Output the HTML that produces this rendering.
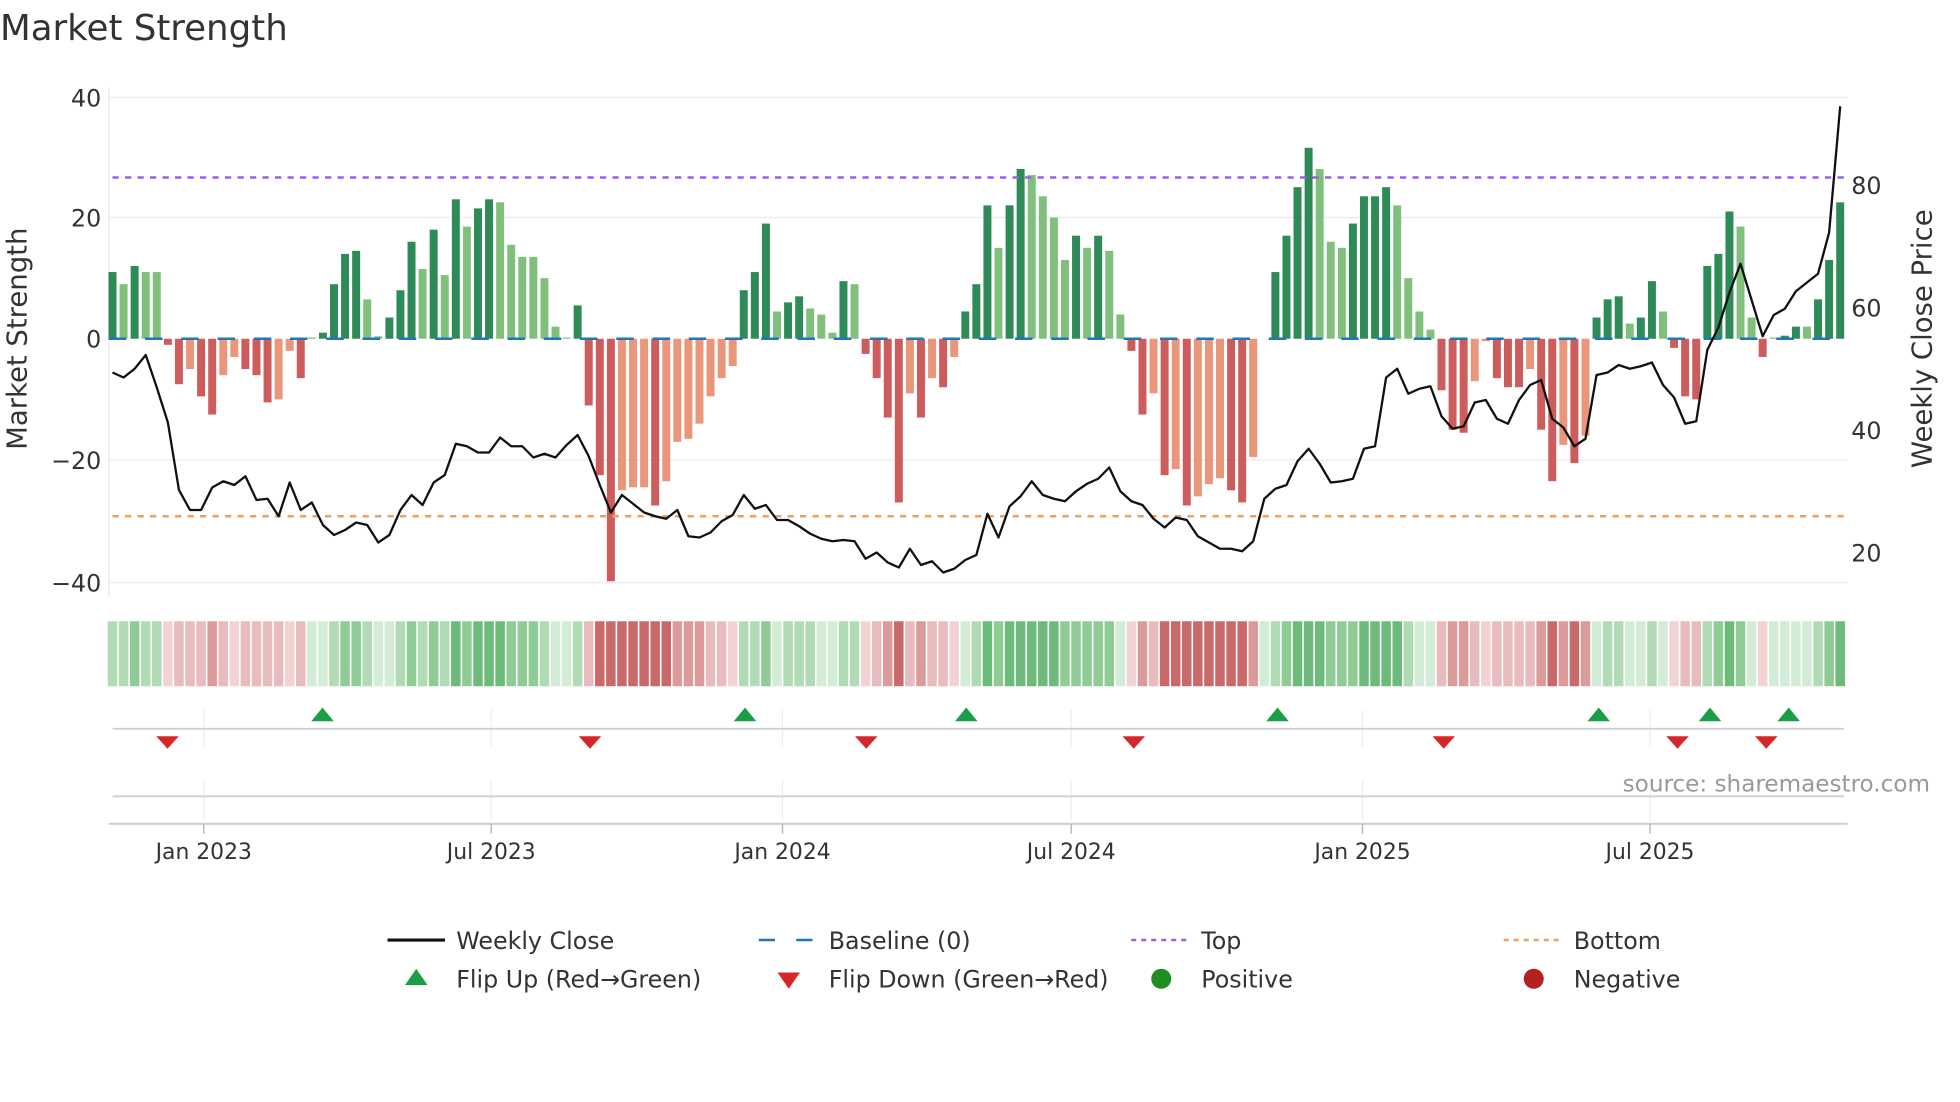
<!DOCTYPE html>
<html><head><meta charset="utf-8"><style>
html,body{margin:0;padding:0;background:#fff;}
svg{display:block;font-family:"DejaVu Sans","Liberation Sans",sans-serif;}
.G{fill:#2e8b57}.g{fill:#80c07c}.R{fill:#cd5c5c}.r{fill:#e9967a}
.g1{fill:#d3ecd5}.g2{fill:#b0dbb4}.g3{fill:#8fcb95}.g4{fill:#6dbb7a}
.r1{fill:#f2d3d3}.r2{fill:#e8bcbc}.r3{fill:#dc9b9b}.r4{fill:#c96a6a}
</style></head><body>
<svg width="1960" height="1102" viewBox="0 0 1568 881.6" xmlns="http://www.w3.org/2000/svg">
<rect width="1568" height="882" fill="#fff"/>
<text x="0" y="32" font-size="28.5" fill="#333">Market Strength</text>
<g stroke="#eceef2" stroke-width="1.2">
<line x1="87" x2="1478" y1="78" y2="78"/><line x1="87" x2="1478" y1="174" y2="174"/>
<line x1="87" x2="1478" y1="368" y2="368"/><line x1="87" x2="1478" y1="466" y2="466"/>
<line x1="87" x2="87" y1="70" y2="478"/>
</g>
<g transform="translate(90,271) scale(8.86,-4.85)">
<rect class="G" x="-0.36" y="0" width="0.72" height="11"/>
<rect class="g" x="0.64" y="0" width="0.72" height="9"/>
<rect class="G" x="1.64" y="0" width="0.72" height="12"/>
<rect class="g" x="2.64" y="0" width="0.72" height="11"/>
<rect class="g" x="3.64" y="0" width="0.72" height="11"/>
<rect class="R" x="4.64" y="-1" width="0.72" height="1"/>
<rect class="R" x="5.64" y="-7.5" width="0.72" height="7.5"/>
<rect class="r" x="6.64" y="-5" width="0.72" height="5"/>
<rect class="R" x="7.64" y="-9.5" width="0.72" height="9.5"/>
<rect class="R" x="8.64" y="-12.5" width="0.72" height="12.5"/>
<rect class="r" x="9.64" y="-6" width="0.72" height="6"/>
<rect class="r" x="10.64" y="-3" width="0.72" height="3"/>
<rect class="R" x="11.64" y="-5" width="0.72" height="5"/>
<rect class="R" x="12.64" y="-6" width="0.72" height="6"/>
<rect class="R" x="13.64" y="-10.5" width="0.72" height="10.5"/>
<rect class="r" x="14.64" y="-10" width="0.72" height="10"/>
<rect class="r" x="15.64" y="-2" width="0.72" height="2"/>
<rect class="R" x="16.64" y="-6.5" width="0.72" height="6.5"/>
<rect class="g" x="17.64" y="0" width="0.72" height="0.2"/>
<rect class="G" x="18.64" y="0" width="0.72" height="1"/>
<rect class="G" x="19.64" y="0" width="0.72" height="9"/>
<rect class="G" x="20.64" y="0" width="0.72" height="14"/>
<rect class="G" x="21.64" y="0" width="0.72" height="14.5"/>
<rect class="g" x="22.64" y="0" width="0.72" height="6.5"/>
<rect class="g" x="23.64" y="0" width="0.72" height="0.4"/>
<rect class="G" x="24.64" y="0" width="0.72" height="3.5"/>
<rect class="G" x="25.64" y="0" width="0.72" height="8"/>
<rect class="G" x="26.64" y="0" width="0.72" height="16"/>
<rect class="g" x="27.64" y="0" width="0.72" height="11.5"/>
<rect class="G" x="28.64" y="0" width="0.72" height="18"/>
<rect class="g" x="29.64" y="0" width="0.72" height="10.5"/>
<rect class="G" x="30.64" y="0" width="0.72" height="23"/>
<rect class="g" x="31.64" y="0" width="0.72" height="18.5"/>
<rect class="G" x="32.64" y="0" width="0.72" height="21.5"/>
<rect class="G" x="33.64" y="0" width="0.72" height="23"/>
<rect class="g" x="34.64" y="0" width="0.72" height="22.5"/>
<rect class="g" x="35.64" y="0" width="0.72" height="15.5"/>
<rect class="g" x="36.64" y="0" width="0.72" height="13.5"/>
<rect class="g" x="37.64" y="0" width="0.72" height="13.5"/>
<rect class="g" x="38.64" y="0" width="0.72" height="10"/>
<rect class="g" x="39.64" y="0" width="0.72" height="2"/>
<rect class="g" x="40.64" y="0" width="0.72" height="0.2"/>
<rect class="G" x="41.64" y="0" width="0.72" height="5.5"/>
<rect class="R" x="42.64" y="-11" width="0.72" height="11"/>
<rect class="R" x="43.64" y="-22.5" width="0.72" height="22.5"/>
<rect class="R" x="44.64" y="-40" width="0.72" height="40"/>
<rect class="r" x="45.64" y="-25" width="0.72" height="25"/>
<rect class="r" x="46.64" y="-24.5" width="0.72" height="24.5"/>
<rect class="r" x="47.64" y="-24.5" width="0.72" height="24.5"/>
<rect class="R" x="48.64" y="-27.5" width="0.72" height="27.5"/>
<rect class="r" x="49.64" y="-23.5" width="0.72" height="23.5"/>
<rect class="r" x="50.64" y="-17" width="0.72" height="17"/>
<rect class="r" x="51.64" y="-16.5" width="0.72" height="16.5"/>
<rect class="r" x="52.64" y="-14" width="0.72" height="14"/>
<rect class="r" x="53.64" y="-9.5" width="0.72" height="9.5"/>
<rect class="r" x="54.64" y="-6.5" width="0.72" height="6.5"/>
<rect class="r" x="55.64" y="-4.5" width="0.72" height="4.5"/>
<rect class="G" x="56.64" y="0" width="0.72" height="8"/>
<rect class="G" x="57.64" y="0" width="0.72" height="11"/>
<rect class="G" x="58.64" y="0" width="0.72" height="19"/>
<rect class="g" x="59.64" y="0" width="0.72" height="4.5"/>
<rect class="G" x="60.64" y="0" width="0.72" height="6"/>
<rect class="G" x="61.64" y="0" width="0.72" height="7"/>
<rect class="g" x="62.64" y="0" width="0.72" height="5"/>
<rect class="g" x="63.64" y="0" width="0.72" height="4"/>
<rect class="g" x="64.64" y="0" width="0.72" height="1"/>
<rect class="G" x="65.64" y="0" width="0.72" height="9.5"/>
<rect class="g" x="66.64" y="0" width="0.72" height="9"/>
<rect class="R" x="67.64" y="-2.5" width="0.72" height="2.5"/>
<rect class="R" x="68.64" y="-6.5" width="0.72" height="6.5"/>
<rect class="R" x="69.64" y="-13" width="0.72" height="13"/>
<rect class="R" x="70.64" y="-27" width="0.72" height="27"/>
<rect class="r" x="71.64" y="-9" width="0.72" height="9"/>
<rect class="R" x="72.64" y="-13" width="0.72" height="13"/>
<rect class="r" x="73.64" y="-6.5" width="0.72" height="6.5"/>
<rect class="R" x="74.64" y="-8" width="0.72" height="8"/>
<rect class="r" x="75.64" y="-3" width="0.72" height="3"/>
<rect class="G" x="76.64" y="0" width="0.72" height="4.5"/>
<rect class="G" x="77.64" y="0" width="0.72" height="9"/>
<rect class="G" x="78.64" y="0" width="0.72" height="22"/>
<rect class="g" x="79.64" y="0" width="0.72" height="15"/>
<rect class="G" x="80.64" y="0" width="0.72" height="22"/>
<rect class="G" x="81.64" y="0" width="0.72" height="28"/>
<rect class="g" x="82.64" y="0" width="0.72" height="27"/>
<rect class="g" x="83.64" y="0" width="0.72" height="23.5"/>
<rect class="g" x="84.64" y="0" width="0.72" height="20"/>
<rect class="g" x="85.64" y="0" width="0.72" height="13"/>
<rect class="G" x="86.64" y="0" width="0.72" height="17"/>
<rect class="g" x="87.64" y="0" width="0.72" height="15"/>
<rect class="G" x="88.64" y="0" width="0.72" height="17"/>
<rect class="g" x="89.64" y="0" width="0.72" height="14.5"/>
<rect class="g" x="90.64" y="0" width="0.72" height="4"/>
<rect class="R" x="91.64" y="-2" width="0.72" height="2"/>
<rect class="R" x="92.64" y="-12.5" width="0.72" height="12.5"/>
<rect class="r" x="93.64" y="-9" width="0.72" height="9"/>
<rect class="R" x="94.64" y="-22.5" width="0.72" height="22.5"/>
<rect class="r" x="95.64" y="-21.5" width="0.72" height="21.5"/>
<rect class="R" x="96.64" y="-27.5" width="0.72" height="27.5"/>
<rect class="r" x="97.64" y="-26" width="0.72" height="26"/>
<rect class="r" x="98.64" y="-24" width="0.72" height="24"/>
<rect class="r" x="99.64" y="-23" width="0.72" height="23"/>
<rect class="R" x="100.64" y="-25" width="0.72" height="25"/>
<rect class="R" x="101.64" y="-27" width="0.72" height="27"/>
<rect class="r" x="102.64" y="-19.5" width="0.72" height="19.5"/>
<rect class="G" x="104.64" y="0" width="0.72" height="11"/>
<rect class="G" x="105.64" y="0" width="0.72" height="17"/>
<rect class="G" x="106.64" y="0" width="0.72" height="25"/>
<rect class="G" x="107.64" y="0" width="0.72" height="31.5"/>
<rect class="g" x="108.64" y="0" width="0.72" height="28"/>
<rect class="g" x="109.64" y="0" width="0.72" height="16"/>
<rect class="g" x="110.64" y="0" width="0.72" height="15"/>
<rect class="G" x="111.64" y="0" width="0.72" height="19"/>
<rect class="G" x="112.64" y="0" width="0.72" height="23.5"/>
<rect class="G" x="113.64" y="0" width="0.72" height="23.5"/>
<rect class="G" x="114.64" y="0" width="0.72" height="25"/>
<rect class="g" x="115.64" y="0" width="0.72" height="22"/>
<rect class="g" x="116.64" y="0" width="0.72" height="10"/>
<rect class="g" x="117.64" y="0" width="0.72" height="4.5"/>
<rect class="g" x="118.64" y="0" width="0.72" height="1.5"/>
<rect class="R" x="119.64" y="-8.5" width="0.72" height="8.5"/>
<rect class="R" x="120.64" y="-15" width="0.72" height="15"/>
<rect class="R" x="121.64" y="-15.5" width="0.72" height="15.5"/>
<rect class="r" x="122.64" y="-7" width="0.72" height="7"/>
<rect class="r" x="123.64" y="-0.4" width="0.72" height="0.4"/>
<rect class="R" x="124.64" y="-6.5" width="0.72" height="6.5"/>
<rect class="R" x="125.64" y="-8" width="0.72" height="8"/>
<rect class="R" x="126.64" y="-8" width="0.72" height="8"/>
<rect class="r" x="127.64" y="-5" width="0.72" height="5"/>
<rect class="R" x="128.64" y="-15" width="0.72" height="15"/>
<rect class="R" x="129.64" y="-23.5" width="0.72" height="23.5"/>
<rect class="r" x="130.64" y="-17.5" width="0.72" height="17.5"/>
<rect class="R" x="131.64" y="-20.5" width="0.72" height="20.5"/>
<rect class="r" x="132.64" y="-16" width="0.72" height="16"/>
<rect class="G" x="133.64" y="0" width="0.72" height="3.5"/>
<rect class="G" x="134.64" y="0" width="0.72" height="6.5"/>
<rect class="G" x="135.64" y="0" width="0.72" height="7"/>
<rect class="g" x="136.64" y="0" width="0.72" height="2.5"/>
<rect class="G" x="137.64" y="0" width="0.72" height="3.5"/>
<rect class="G" x="138.64" y="0" width="0.72" height="9.5"/>
<rect class="g" x="139.64" y="0" width="0.72" height="4.5"/>
<rect class="R" x="140.64" y="-1.5" width="0.72" height="1.5"/>
<rect class="R" x="141.64" y="-9.5" width="0.72" height="9.5"/>
<rect class="R" x="142.64" y="-10" width="0.72" height="10"/>
<rect class="G" x="143.64" y="0" width="0.72" height="12"/>
<rect class="G" x="144.64" y="0" width="0.72" height="14"/>
<rect class="G" x="145.64" y="0" width="0.72" height="21"/>
<rect class="g" x="146.64" y="0" width="0.72" height="18.5"/>
<rect class="g" x="147.64" y="0" width="0.72" height="3.5"/>
<rect class="R" x="148.64" y="-3" width="0.72" height="3"/>
<rect class="g" x="149.64" y="0" width="0.72" height="0.2"/>
<rect class="G" x="150.64" y="0" width="0.72" height="0.5"/>
<rect class="G" x="151.64" y="0" width="0.72" height="2"/>
<rect class="g" x="152.64" y="0" width="0.72" height="2"/>
<rect class="G" x="153.64" y="0" width="0.72" height="6.5"/>
<rect class="G" x="154.64" y="0" width="0.72" height="13"/>
<rect class="G" x="155.64" y="0" width="0.72" height="22.5"/>
</g>
<line x1="87" x2="1478" y1="271" y2="271" stroke="#1f77b4" stroke-width="2" stroke-dasharray="14,15"/>
<line x1="90" x2="1478" y1="142" y2="142" stroke="#9b5fe0" stroke-width="2" stroke-dasharray="5,5"/>
<line x1="90" x2="1478" y1="413" y2="413" stroke="#f0a060" stroke-width="2" stroke-dasharray="5,5"/>
<g transform="translate(90,0) scale(8.86,1)">
<polyline fill="none" stroke="#111" stroke-width="2.3" stroke-linejoin="round" vector-effect="non-scaling-stroke" points="0,298 1,302 2,295 3,284 4,310 5,338 6,392 7,408 8,408 9,390 10,385 11,388 12,381 13,400 14,399 15,413 16,386 17,408 18,402 19,420 20,428 21,424 22,418 23,420 24,434 25,428 26,408 27,396 28,404 29,386 30,380 31,355 32,357 33,362 34,362 35,350 36,357 37,357 38,366 39,363 40,366 41,356 42,348 43,365 44,388 45,410 46,396 47,403 48,410 49,413 50,415 51,408 52,429 53,430 54,426 55,417 56,412 57,396 58,407 59,404 60,416 61,416 62,421 63,427 64,431 65,433 66,432 67,433 68,447 69,442 70,450 71,454 72,439 73,452 74,449 75,458 76,455 77,448 78,444 79,411 80,430 81,405 82,397 83,385 84,396 85,399 86,401 87,393 88,387 89,383 90,374 91,393 92,401 93,404 94,415 95,422 96,414 97,416 98,429 99,434 100,439 101,439 102,441 103,433 104,399 105,391 106,388 107,369 108,359 109,371 110,386 111,385 112,383 113,359 114,357 115,302 116,295 117,315 118,311 119,309 120,333 121,343 122,341 123,322 124,320 125,335 126,339 127,320 128,308 129,304 130,335 131,342 132,357 133,351 134,300 135,298 136,292 137,295 138,293 139,290 140,308 141,318 142,339 143,337 144,280 145,262 146,234 147,211 148,240 149,269 150,252 151,247 152,233 153,226 154,219 155,186 156,85"/>
</g>
<g font-size="19" fill="#333" text-anchor="end">
<text x="81" y="85">40</text><text x="81" y="181">20</text><text x="81" y="278">0</text>
<text x="81" y="375">−20</text><text x="81" y="473">−40</text>
</g>
<g font-size="19" fill="#333">
<text x="1481" y="155">80</text><text x="1481" y="253">60</text><text x="1481" y="351">40</text><text x="1481" y="449">20</text>
</g>
<text transform="translate(21,271) rotate(-90)" font-size="22" fill="#333" text-anchor="middle">Market Strength</text>
<text transform="translate(1545,271) rotate(-90)" font-size="22" fill="#333" text-anchor="middle">Weekly Close Price</text>
<g transform="translate(90,497) scale(8.86,1)">
<rect class="g2" x="-0.43" width="0.86" height="52"/><rect class="g2" x="0.57" width="0.86" height="52"/><rect class="g3" x="1.57" width="0.86" height="52"/><rect class="g2" x="2.57" width="0.86" height="52"/><rect class="g2" x="3.57" width="0.86" height="52"/>
<rect class="r1" x="4.57" width="0.86" height="52"/><rect class="r2" x="5.57" width="0.86" height="52"/><rect class="r2" x="6.57" width="0.86" height="52"/><rect class="r2" x="7.57" width="0.86" height="52"/><rect class="r3" x="8.57" width="0.86" height="52"/>
<rect class="r2" x="9.57" width="0.86" height="52"/><rect class="r1" x="10.57" width="0.86" height="52"/><rect class="r2" x="11.57" width="0.86" height="52"/><rect class="r2" x="12.57" width="0.86" height="52"/><rect class="r2" x="13.57" width="0.86" height="52"/>
<rect class="r2" x="14.57" width="0.86" height="52"/><rect class="r1" x="15.57" width="0.86" height="52"/><rect class="r2" x="16.57" width="0.86" height="52"/><rect class="g1" x="17.57" width="0.86" height="52"/><rect class="g1" x="18.57" width="0.86" height="52"/>
<rect class="g2" x="19.57" width="0.86" height="52"/><rect class="g3" x="20.57" width="0.86" height="52"/><rect class="g3" x="21.57" width="0.86" height="52"/><rect class="g2" x="22.57" width="0.86" height="52"/><rect class="g1" x="23.57" width="0.86" height="52"/>
<rect class="g1" x="24.57" width="0.86" height="52"/><rect class="g2" x="25.57" width="0.86" height="52"/><rect class="g3" x="26.57" width="0.86" height="52"/><rect class="g2" x="27.57" width="0.86" height="52"/><rect class="g3" x="28.57" width="0.86" height="52"/>
<rect class="g2" x="29.57" width="0.86" height="52"/><rect class="g4" x="30.57" width="0.86" height="52"/><rect class="g3" x="31.57" width="0.86" height="52"/><rect class="g4" x="32.57" width="0.86" height="52"/><rect class="g4" x="33.57" width="0.86" height="52"/>
<rect class="g4" x="34.57" width="0.86" height="52"/><rect class="g3" x="35.57" width="0.86" height="52"/><rect class="g3" x="36.57" width="0.86" height="52"/><rect class="g3" x="37.57" width="0.86" height="52"/><rect class="g2" x="38.57" width="0.86" height="52"/>
<rect class="g1" x="39.57" width="0.86" height="52"/><rect class="g1" x="40.57" width="0.86" height="52"/><rect class="g2" x="41.57" width="0.86" height="52"/><rect class="r2" x="42.57" width="0.86" height="52"/><rect class="r4" x="43.57" width="0.86" height="52"/>
<rect class="r4" x="44.57" width="0.86" height="52"/><rect class="r4" x="45.57" width="0.86" height="52"/><rect class="r4" x="46.57" width="0.86" height="52"/><rect class="r4" x="47.57" width="0.86" height="52"/><rect class="r4" x="48.57" width="0.86" height="52"/>
<rect class="r4" x="49.57" width="0.86" height="52"/><rect class="r3" x="50.57" width="0.86" height="52"/><rect class="r3" x="51.57" width="0.86" height="52"/><rect class="r3" x="52.57" width="0.86" height="52"/><rect class="r2" x="53.57" width="0.86" height="52"/>
<rect class="r2" x="54.57" width="0.86" height="52"/><rect class="r1" x="55.57" width="0.86" height="52"/><rect class="g2" x="56.57" width="0.86" height="52"/><rect class="g2" x="57.57" width="0.86" height="52"/><rect class="g3" x="58.57" width="0.86" height="52"/>
<rect class="g1" x="59.57" width="0.86" height="52"/><rect class="g2" x="60.57" width="0.86" height="52"/><rect class="g2" x="61.57" width="0.86" height="52"/><rect class="g2" x="62.57" width="0.86" height="52"/><rect class="g1" x="63.57" width="0.86" height="52"/>
<rect class="g1" x="64.57" width="0.86" height="52"/><rect class="g2" x="65.57" width="0.86" height="52"/><rect class="g2" x="66.57" width="0.86" height="52"/><rect class="r1" x="67.57" width="0.86" height="52"/><rect class="r2" x="68.57" width="0.86" height="52"/>
<rect class="r3" x="69.57" width="0.86" height="52"/><rect class="r4" x="70.57" width="0.86" height="52"/><rect class="r2" x="71.57" width="0.86" height="52"/><rect class="r3" x="72.57" width="0.86" height="52"/><rect class="r2" x="73.57" width="0.86" height="52"/>
<rect class="r2" x="74.57" width="0.86" height="52"/><rect class="r1" x="75.57" width="0.86" height="52"/><rect class="g1" x="76.57" width="0.86" height="52"/><rect class="g2" x="77.57" width="0.86" height="52"/><rect class="g4" x="78.57" width="0.86" height="52"/>
<rect class="g3" x="79.57" width="0.86" height="52"/><rect class="g4" x="80.57" width="0.86" height="52"/><rect class="g4" x="81.57" width="0.86" height="52"/><rect class="g4" x="82.57" width="0.86" height="52"/><rect class="g4" x="83.57" width="0.86" height="52"/>
<rect class="g4" x="84.57" width="0.86" height="52"/><rect class="g3" x="85.57" width="0.86" height="52"/><rect class="g3" x="86.57" width="0.86" height="52"/><rect class="g3" x="87.57" width="0.86" height="52"/><rect class="g3" x="88.57" width="0.86" height="52"/>
<rect class="g3" x="89.57" width="0.86" height="52"/><rect class="g1" x="90.57" width="0.86" height="52"/><rect class="r1" x="91.57" width="0.86" height="52"/><rect class="r3" x="92.57" width="0.86" height="52"/><rect class="r2" x="93.57" width="0.86" height="52"/>
<rect class="r4" x="94.57" width="0.86" height="52"/><rect class="r4" x="95.57" width="0.86" height="52"/><rect class="r4" x="96.57" width="0.86" height="52"/><rect class="r4" x="97.57" width="0.86" height="52"/><rect class="r4" x="98.57" width="0.86" height="52"/>
<rect class="r4" x="99.57" width="0.86" height="52"/><rect class="r4" x="100.57" width="0.86" height="52"/><rect class="r4" x="101.57" width="0.86" height="52"/><rect class="r3" x="102.57" width="0.86" height="52"/><rect class="g1" x="103.57" width="0.86" height="52"/>
<rect class="g2" x="104.57" width="0.86" height="52"/><rect class="g3" x="105.57" width="0.86" height="52"/><rect class="g4" x="106.57" width="0.86" height="52"/><rect class="g4" x="107.57" width="0.86" height="52"/><rect class="g4" x="108.57" width="0.86" height="52"/>
<rect class="g3" x="109.57" width="0.86" height="52"/><rect class="g3" x="110.57" width="0.86" height="52"/><rect class="g3" x="111.57" width="0.86" height="52"/><rect class="g4" x="112.57" width="0.86" height="52"/><rect class="g4" x="113.57" width="0.86" height="52"/>
<rect class="g4" x="114.57" width="0.86" height="52"/><rect class="g4" x="115.57" width="0.86" height="52"/><rect class="g2" x="116.57" width="0.86" height="52"/><rect class="g1" x="117.57" width="0.86" height="52"/><rect class="g1" x="118.57" width="0.86" height="52"/>
<rect class="r2" x="119.57" width="0.86" height="52"/><rect class="r3" x="120.57" width="0.86" height="52"/><rect class="r3" x="121.57" width="0.86" height="52"/><rect class="r2" x="122.57" width="0.86" height="52"/><rect class="r1" x="123.57" width="0.86" height="52"/>
<rect class="r2" x="124.57" width="0.86" height="52"/><rect class="r2" x="125.57" width="0.86" height="52"/><rect class="r2" x="126.57" width="0.86" height="52"/><rect class="r2" x="127.57" width="0.86" height="52"/><rect class="r3" x="128.57" width="0.86" height="52"/>
<rect class="r4" x="129.57" width="0.86" height="52"/><rect class="r3" x="130.57" width="0.86" height="52"/><rect class="r4" x="131.57" width="0.86" height="52"/><rect class="r3" x="132.57" width="0.86" height="52"/><rect class="g1" x="133.57" width="0.86" height="52"/>
<rect class="g2" x="134.57" width="0.86" height="52"/><rect class="g2" x="135.57" width="0.86" height="52"/><rect class="g1" x="136.57" width="0.86" height="52"/><rect class="g1" x="137.57" width="0.86" height="52"/><rect class="g2" x="138.57" width="0.86" height="52"/>
<rect class="g1" x="139.57" width="0.86" height="52"/><rect class="r1" x="140.57" width="0.86" height="52"/><rect class="r2" x="141.57" width="0.86" height="52"/><rect class="r2" x="142.57" width="0.86" height="52"/><rect class="g2" x="143.57" width="0.86" height="52"/>
<rect class="g3" x="144.57" width="0.86" height="52"/><rect class="g4" x="145.57" width="0.86" height="52"/><rect class="g3" x="146.57" width="0.86" height="52"/><rect class="g1" x="147.57" width="0.86" height="52"/><rect class="r1" x="148.57" width="0.86" height="52"/>
<rect class="g1" x="149.57" width="0.86" height="52"/><rect class="g1" x="150.57" width="0.86" height="52"/><rect class="g1" x="151.57" width="0.86" height="52"/><rect class="g1" x="152.57" width="0.86" height="52"/><rect class="g2" x="153.57" width="0.86" height="52"/>
<rect class="g3" x="154.57" width="0.86" height="52"/><rect class="g4" x="155.57" width="0.86" height="52"/>
</g>
<g stroke="#eceef2" stroke-width="1">
<line x1="163" x2="163" y1="568" y2="598"/><line x1="393" x2="393" y1="568" y2="598"/><line x1="626" x2="626" y1="568" y2="598"/>
<line x1="857" x2="857" y1="568" y2="598"/><line x1="1090" x2="1090" y1="568" y2="598"/><line x1="1320" x2="1320" y1="568" y2="598"/>
<line x1="163" x2="163" y1="624" y2="656"/><line x1="393" x2="393" y1="624" y2="656"/><line x1="626" x2="626" y1="624" y2="656"/>
<line x1="857" x2="857" y1="624" y2="656"/><line x1="1090" x2="1090" y1="624" y2="656"/><line x1="1320" x2="1320" y1="624" y2="656"/>
</g>
<line x1="90" x2="1475" y1="583" y2="583" stroke="#d0d0d0" stroke-width="1.5"/>
<line x1="90" x2="1475" y1="637" y2="637" stroke="#d0d0d0" stroke-width="1.5"/>
<line x1="87" x2="1478" y1="659" y2="659" stroke="#ccc" stroke-width="1.5"/>
<g stroke="#bbb" stroke-width="1.2">
<line x1="163" x2="163" y1="659" y2="667"/><line x1="393" x2="393" y1="659" y2="667"/><line x1="626" x2="626" y1="659" y2="667"/>
<line x1="857" x2="857" y1="659" y2="667"/><line x1="1090" x2="1090" y1="659" y2="667"/><line x1="1320" x2="1320" y1="659" y2="667"/>
</g>
<g fill="#1a9e48">
<polygon points="249,577 267,577 258,566"/><polygon points="587,577 605,577 596,566"/><polygon points="764,577 782,577 773,566"/>
<polygon points="1013,577 1031,577 1022,566"/><polygon points="1270,577 1288,577 1279,566"/><polygon points="1359,577 1377,577 1368,566"/>
<polygon points="1422,577 1440,577 1431,566"/>
</g>
<g fill="#d62728">
<polygon points="125,589 143,589 134,599"/><polygon points="463,589 481,589 472,599"/><polygon points="684,589 702,589 693,599"/>
<polygon points="898,589 916,589 907,599"/><polygon points="1146,589 1164,589 1155,599"/><polygon points="1333,589 1351,589 1342,599"/>
<polygon points="1404,589 1422,589 1413,599"/>
</g>
<text x="1544" y="633" font-size="18.5" fill="#999" text-anchor="end">source: sharemaestro.com</text>
<g font-size="17.5" fill="#333" text-anchor="middle">
<text x="163" y="687">Jan 2023</text><text x="393" y="687">Jul 2023</text><text x="626" y="687">Jan 2024</text>
<text x="857" y="687">Jul 2024</text><text x="1090" y="687">Jan 2025</text><text x="1320" y="687">Jul 2025</text>
</g>
<g font-size="19" fill="#333">
<line x1="310" x2="356" y1="752" y2="752" stroke="#111" stroke-width="2.5"/>
<text x="365" y="759">Weekly Close</text>
<line x1="607" x2="651" y1="752" y2="752" stroke="#1f77b4" stroke-width="2" stroke-dasharray="13,17"/>
<text x="663" y="759">Baseline (0)</text>
<line x1="905" x2="949" y1="752" y2="752" stroke="#9b5fe0" stroke-width="2" stroke-dasharray="4,4"/>
<text x="961" y="759">Top</text>
<line x1="1203" x2="1247" y1="752" y2="752" stroke="#f0a060" stroke-width="2" stroke-dasharray="4,4"/>
<text x="1259" y="759">Bottom</text>
<polygon points="324,788 342,788 333,775" fill="#1a9e48"/>
<text x="365" y="790">Flip Up (Red→Green)</text>
<polygon points="622,778 640,778 631,791" fill="#d62728"/>
<text x="663" y="790">Flip Down (Green→Red)</text>
<circle cx="929" cy="783" r="8" fill="#228b22"/>
<text x="961" y="790">Positive</text>
<circle cx="1227" cy="783" r="8" fill="#b22222"/>
<text x="1259" y="790">Negative</text>
</g>
</svg>
</body></html>
